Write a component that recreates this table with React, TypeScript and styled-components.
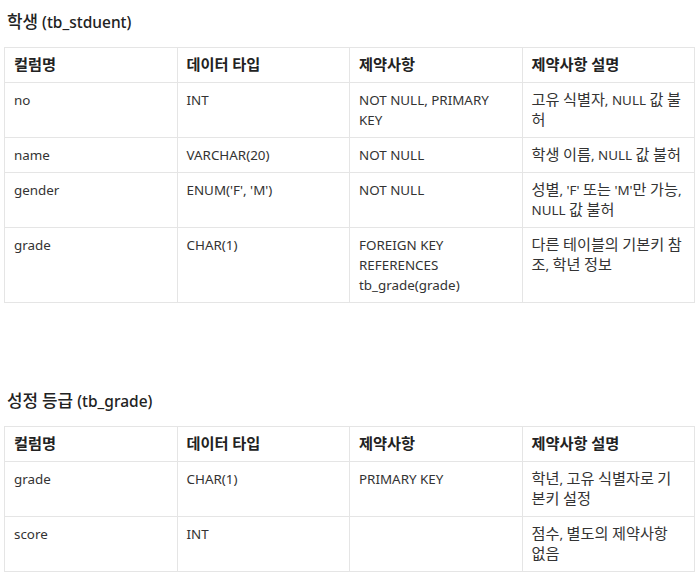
import React from "react";
import styled, { createGlobalStyle } from "styled-components";

const Global = createGlobalStyle`
  html, body { margin: 0; padding: 0; background: #fff; }
  body {
    font-family: "Noto Sans", "Noto Sans CJK KR", sans-serif;
    color: #333;
  }
`;

const Page = styled.div`
  padding: 10px 4px 0 4px;
  width: 691px;
`;

const Section = styled.section<{ $gap?: number }>`
  margin-top: ${(p) => p.$gap ?? 0}px;
`;

const Title = styled.h3`
  margin: 0 0 12px 3px;
  font-size: 15.5px;
  line-height: 25px;
  font-weight: 500;
  color: #222;
`;

const Ko = styled.span<{ $scale: number }>`
  font-family: "Noto Sans CJK KR", sans-serif;
  font-size: ${(p) => p.$scale}em;
  line-height: 1;
`;

const Table = styled.table`
  width: 691px;
  border-collapse: collapse;
  table-layout: fixed;
`;

const Th = styled.th`
  border: 1px solid #e5e5e5;
  padding: 7px 9px;
  font-size: 14px;
  line-height: 20px;
  font-weight: 700;
  text-align: left;
  color: #222;
`;

const Td = styled.td`
  border: 1px solid #e5e5e5;
  padding: 7px 9px;
  font-size: 13.4px;
  line-height: 20px;
  vertical-align: top;
  color: #333;
`;

const HANGUL = /([\u3131-\u318E\uAC00-\uD7A3]+)/;

const Mixed = ({ text, scale = 1.09 }: { text: string; scale?: number }) => (
  <>
    {text.split(HANGUL).map((part, i) =>
      HANGUL.test(part) ? (
        <Ko key={i} $scale={scale}>
          {part}
        </Ko>
      ) : (
        <React.Fragment key={i}>{part}</React.Fragment>
      )
    )}
  </>
);

type Row = [string, string, string, string];

const headers = ["컬럼명", "데이터 타입", "제약사항", "제약사항 설명"];

const student: Row[] = [
  ["no", "INT", "NOT NULL, PRIMARY KEY", "고유 식별자, NULL 값 불허"],
  ["name", "VARCHAR(20)", "NOT NULL", "학생 이름, NULL 값 불허"],
  ["gender", "ENUM('F', 'M')", "NOT NULL", "성별, 'F' 또는 'M'만 가능, NULL 값 불허"],
  ["grade", "CHAR(1)", "FOREIGN KEY REFERENCES tb_grade(grade)", "다른 테이블의 기본키 참조, 학년 정보"],
];

const grade: Row[] = [
  ["grade", "CHAR(1)", "PRIMARY KEY", "학년, 고유 식별자로 기본키 설정"],
  ["score", "INT", "", "점수, 별도의 제약사항 없음"],
];

const SchemaTable = ({ rows }: { rows: Row[] }) => (
  <Table>
    <thead>
      <tr>
        {headers.map((h) => (
          <Th key={h}>
            <Mixed text={h} />
          </Th>
        ))}
      </tr>
    </thead>
    <tbody>
      {rows.map((r, i) => (
        <tr key={i}>
          {r.map((c, j) => (
            <Td key={j}>
              <Mixed text={c} scale={1.134} />
            </Td>
          ))}
        </tr>
      ))}
    </tbody>
  </Table>
);

export default function App() {
  return (
    <Page>
      <Global />
      <Section>
        <Title>
          <Mixed text="학생 (tb_stduent)" />
        </Title>
        <SchemaTable rows={student} />
      </Section>
      <Section $gap={86}>
        <Title>
          <Mixed text="성정 등급 (tb_grade)" />
        </Title>
        <SchemaTable rows={grade} />
      </Section>
    </Page>
  );
}
